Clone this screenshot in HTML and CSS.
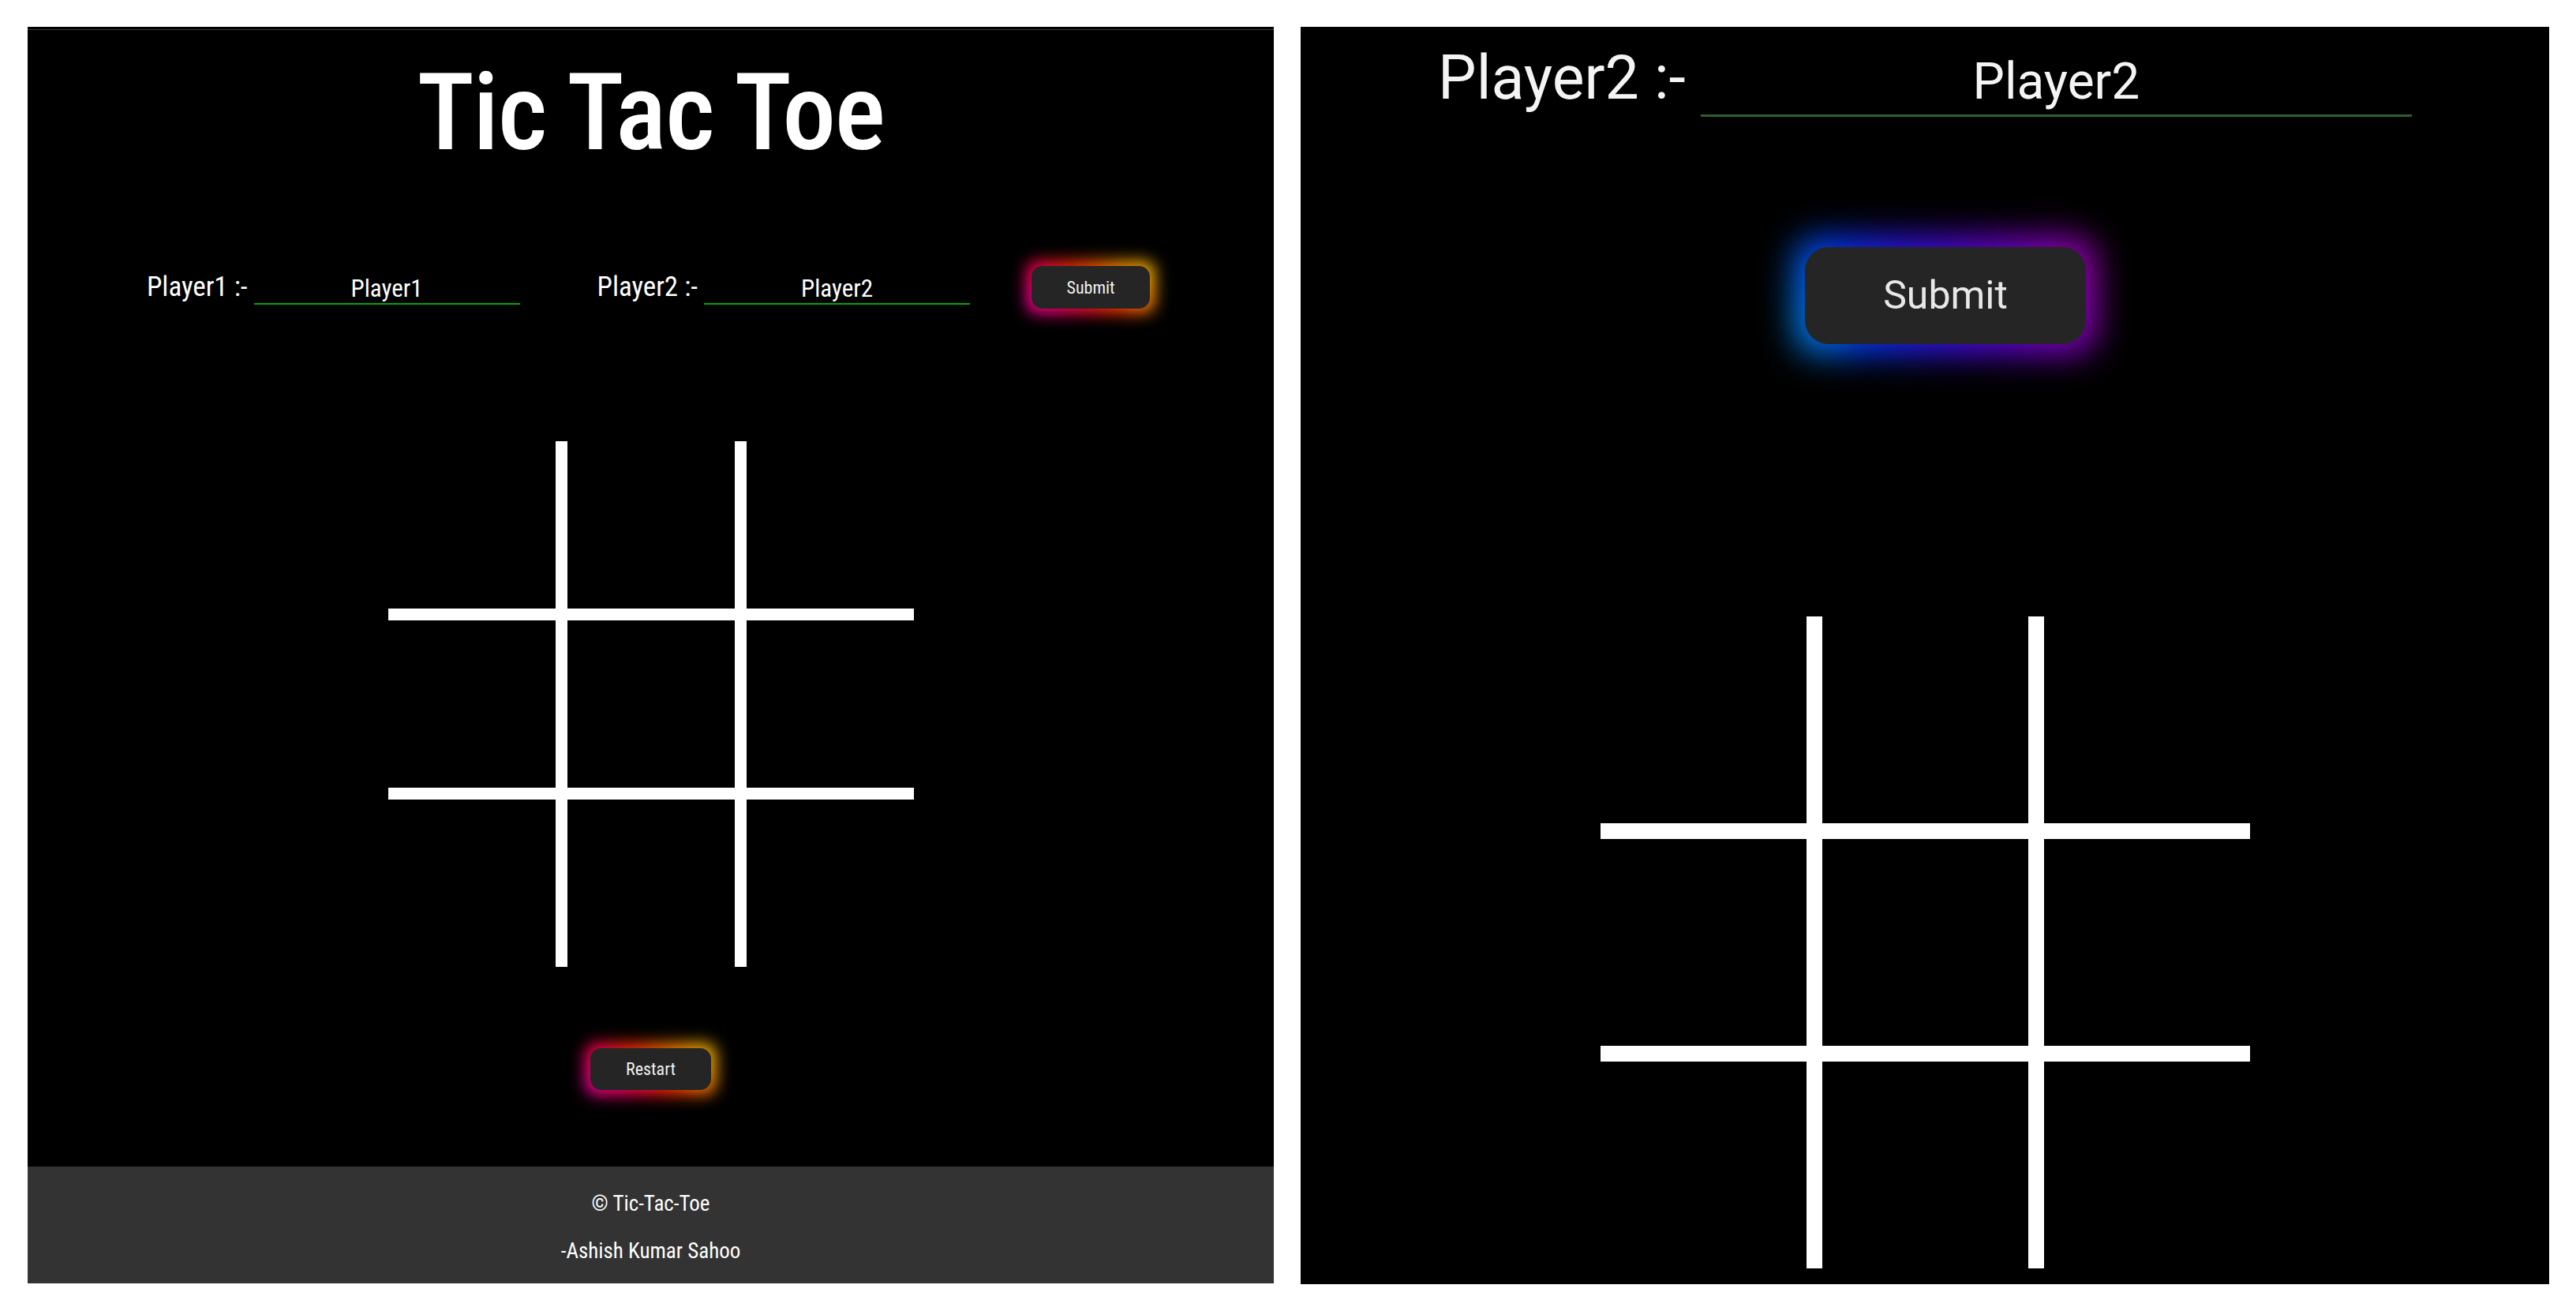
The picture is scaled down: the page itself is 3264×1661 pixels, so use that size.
FILE: index.html
```html
<!DOCTYPE html>
<html lang="en">
<head>
<meta charset="utf-8">
<title>Tic Tac Toe</title>
<link rel="stylesheet" href="styles.css">
</head>
<body>
<main class="shot shot-desktop">
  <div class="chrome"></div>
  <div class="game">
    <h1 class="title">Tic Tac Toe</h1>
    <div class="players">
      <div class="field">
        <label class="field-label" for="p1">Player1 :-</label>
        <input class="field-input" id="p1" type="text" value="Player1">
      </div>
      <div class="field">
        <label class="field-label" for="p2">Player2 :-</label>
        <input class="field-input" id="p2" type="text" value="Player2">
      </div>
      <button class="glow-btn glow-warm submit-btn">Submit</button>
    </div>
    <div class="board">
      <div class="cell"></div><div class="cell"></div><div class="cell"></div>
      <div class="cell"></div><div class="cell"></div><div class="cell"></div>
      <div class="cell"></div><div class="cell"></div><div class="cell"></div>
    </div>
    <button class="glow-btn glow-warm restart-btn">Restart</button>
  </div>
  <footer class="footer">
    <p>© Tic-Tac-Toe</p>
    <p>-Ashish Kumar Sahoo</p>
  </footer>
</main>
<section class="shot shot-mobile">
  <div class="m-players">
    <label class="m-label" for="m2">Player2 :-</label>
    <input class="m-input" id="m2" type="text" value="Player2">
  </div>
  <button class="glow-btn glow-cool m-submit">Submit</button>
  <div class="board board-lg">
    <div class="cell"></div><div class="cell"></div><div class="cell"></div>
    <div class="cell"></div><div class="cell"></div><div class="cell"></div>
    <div class="cell"></div><div class="cell"></div><div class="cell"></div>
  </div>
</section>
</body>
</html>
```
FILE: styles.css
```css
html, body {
  margin: 0;
  padding: 0;
}

body {
  width: 3264px;
  height: 1661px;
  background: #ffffff;
  display: flex;
  align-items: flex-start;
  gap: 34px;
  padding: 34px 0 0 35px;
  box-sizing: border-box;
  overflow: hidden;
  font-family: "Roboto", "Liberation Sans", sans-serif;
}

.shot {
  background: #000;
  color: #fff;
  overflow: hidden;
  display: flex;
  flex-direction: column;
  flex: none;
}

/* ---------- desktop screenshot ---------- */
.shot-desktop {
  width: 1579px;
  height: 1592px;
  font-stretch: 75%;
}

.chrome {
  height: 3px;
  border-bottom: 1px solid #3a3a3a;
  flex: none;
}

.game {
  flex: 1;
  display: flex;
  flex-direction: column;
  align-items: center;
}

.title {
  margin: 37px 0 0;
  font-size: 136px;
  line-height: 136px;
  font-weight: 500;
  letter-spacing: -1.5px;
}

.players {
  margin-top: 126px;
  margin-right: 6px;
  display: flex;
  align-items: center;
}

.field {
  display: flex;
  align-items: center;
  gap: 8px;
}

.field + .field {
  margin-left: 98px;
}

.field-label {
  font-size: 35px;
  line-height: 54px;
}

.field-input {
  width: 337px;
  height: 40px;
  margin-top: 4px;
  box-sizing: border-box;
  padding: 0;
  background: transparent;
  border: none;
  border-bottom: 2px solid #00a800;
  color: #fff;
  font-family: inherit;
  font-stretch: 75%;
  font-size: 31px;
  text-align: center;
  outline: none;
}

.glow-btn {
  position: relative;
  z-index: 0;
  border: none;
  background: transparent;
  color: #f2f2f2;
  font-family: inherit;
  font-stretch: inherit;
  cursor: pointer;
  padding: 0;
}

.glow-btn::before,
.glow-btn::after {
  content: "";
  position: absolute;
  border-radius: inherit;
  z-index: -1;
}

.glow-btn::after {
  inset: 0;
  background: #252525;
}

.glow-warm::before {
  inset: -6px;
  background: linear-gradient(45deg, #ff00b4 0%, #ff0050 30%, #ff2a00 50%, #ff8c00 75%, #ffd000 100%);
  filter: blur(10px);
}

.submit-btn {
  width: 150px;
  height: 54px;
  border-radius: 14px;
  font-size: 22px;
  margin-left: 78px;
}

.board {
  margin-top: 168px;
  display: grid;
  grid-template-columns: repeat(3, 212px);
  grid-template-rows: repeat(3, 212px);
  gap: 15px;
  background: #fff;
}

.cell {
  background: #000;
}

.restart-btn {
  margin-top: 103px;
  width: 153px;
  height: 53px;
  border-radius: 14px;
  font-size: 22px;
}

.footer {
  flex: none;
  height: 148px;
  box-sizing: border-box;
  padding-top: 27px;
  background: #333333;
  display: flex;
  flex-direction: column;
  align-items: center;
  gap: 20px;
  font-size: 27px;
}

.footer p {
  margin: 0;
  line-height: 40px;
}

/* ---------- mobile screenshot ---------- */
.shot-mobile {
  width: 1582px;
  height: 1593px;
  align-items: center;
}

.m-players {
  margin-top: 24px;
  display: flex;
  align-items: baseline;
  gap: 19px;
}

.m-label {
  font-size: 77px;
  line-height: 82px;
  color: #f4f4f4;
}

.m-input {
  width: 901px;
  height: 85px;
  box-sizing: border-box;
  padding: 0;
  background: transparent;
  border: none;
  border-bottom: 3px solid #2f5f2f;
  color: #f4f4f4;
  font-family: inherit;
  font-size: 64px;
  text-align: center;
  outline: none;
}

.m-submit {
  margin-top: 165px;
  margin-left: 52px;
  width: 356px;
  height: 123px;
  border-radius: 30px;
  font-size: 50px;
  color: #e8e8e8;
}

.glow-cool::before {
  inset: -12px;
  background: linear-gradient(70deg, #00a8ff 0%, #0038ff 22%, #3a10f0 45%, #7000d8 70%, #a800b0 100%);
  filter: blur(22px);
}

.board-lg {
  margin-top: 345px;
  grid-template-columns: repeat(3, 261px);
  grid-template-rows: repeat(3, 262px);
  gap: 20px;
}
```
